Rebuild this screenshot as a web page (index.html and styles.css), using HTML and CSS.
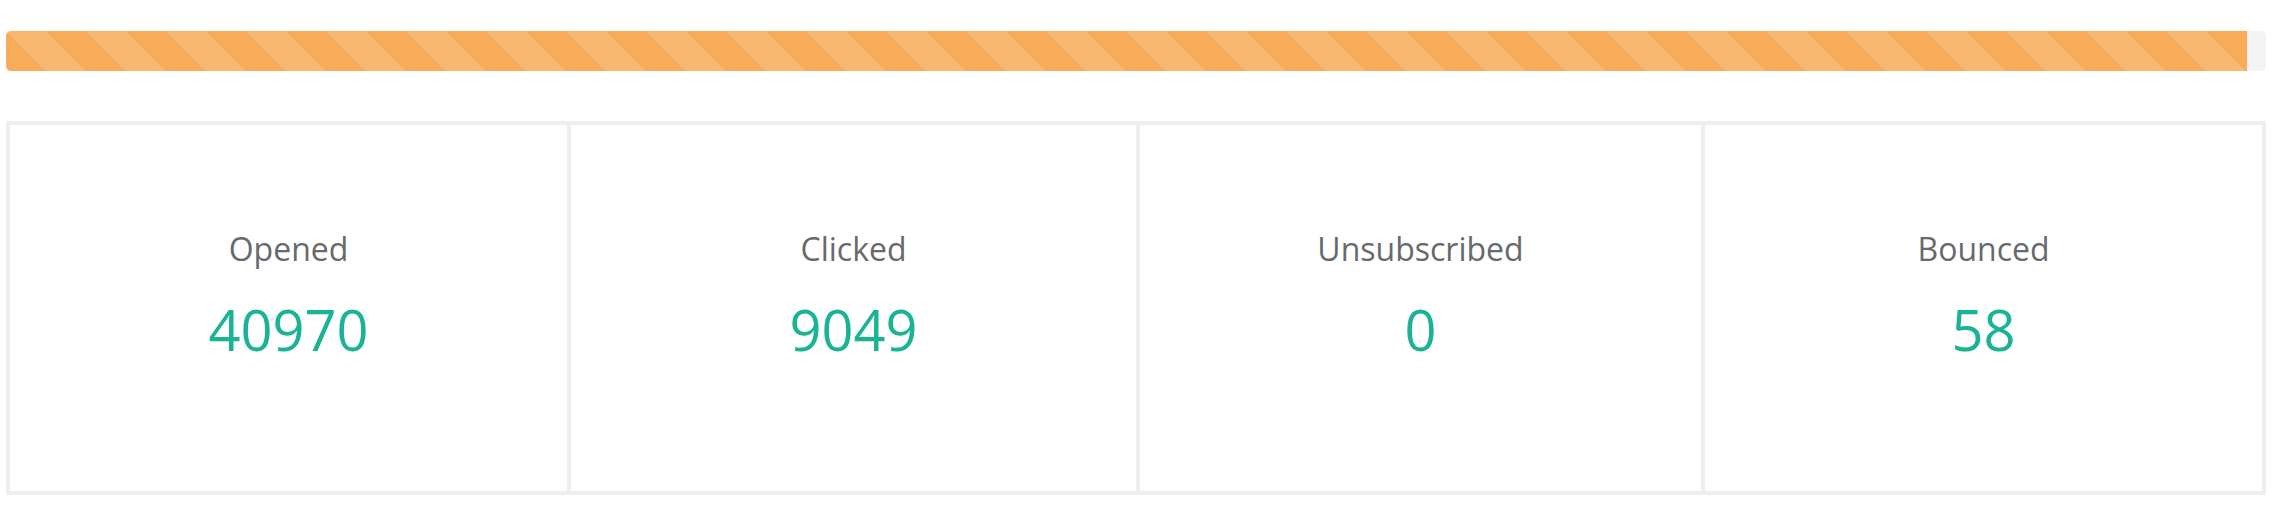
FILE: index.html
```html
<!DOCTYPE html>
<html lang="en">
<head>
<meta charset="utf-8">
<title>Campaign stats</title>
<link rel="stylesheet" href="styles.css">
</head>
<body>
  <div class="page">
    <div class="progress">
      <div class="progress-fill" style="width: 99.16%"></div>
    </div>
    <div class="stats">
      <div class="stat">
        <div class="stat-label">Opened</div>
        <div class="stat-value">40970</div>
      </div>
      <div class="stat">
        <div class="stat-label">Clicked</div>
        <div class="stat-value">9049</div>
      </div>
      <div class="stat">
        <div class="stat-label">Unsubscribed</div>
        <div class="stat-value">0</div>
      </div>
      <div class="stat">
        <div class="stat-label">Bounced</div>
        <div class="stat-value">58</div>
      </div>
    </div>
  </div>
</body>
</html>
```
FILE: styles.css
```css
html, body {
  margin: 0;
  padding: 0;
  background: #ffffff;
}

body {
  font-family: "Open Sans", "Liberation Sans", sans-serif;
  color: #676a6c;
}

.page {
  padding: 31px 10px 0 6px;
}

.progress {
  height: 40px;
  background: #f3f3f3;
  border-radius: 5px;
  overflow: hidden;
  display: flex;
}

.progress-fill {
  height: 100%;
  background-color: #f8ac59;
  background-image: linear-gradient(45deg,
    rgba(255, 255, 255, 0.15) 25%, transparent 25%,
    transparent 50%, rgba(255, 255, 255, 0.15) 50%,
    rgba(255, 255, 255, 0.15) 75%, transparent 75%, transparent);
  background-size: 80px 80px;
}

.stats {
  margin-top: 50px;
  display: grid;
  grid-template-columns: 557fr 565fr 561fr 557fr;
  gap: 4px;
  padding: 4px;
  background: #eeeeee;
}

.stat {
  background: #ffffff;
  height: 366px;
  box-sizing: border-box;
  padding-top: 102px;
  text-align: center;
}

.stat-label {
  font-size: 32px;
  line-height: 44px;
  color: #676a6c;
}

.stat-value {
  margin-top: 23px;
  font-size: 56px;
  line-height: 70px;
  color: #1ab394;
}
```
